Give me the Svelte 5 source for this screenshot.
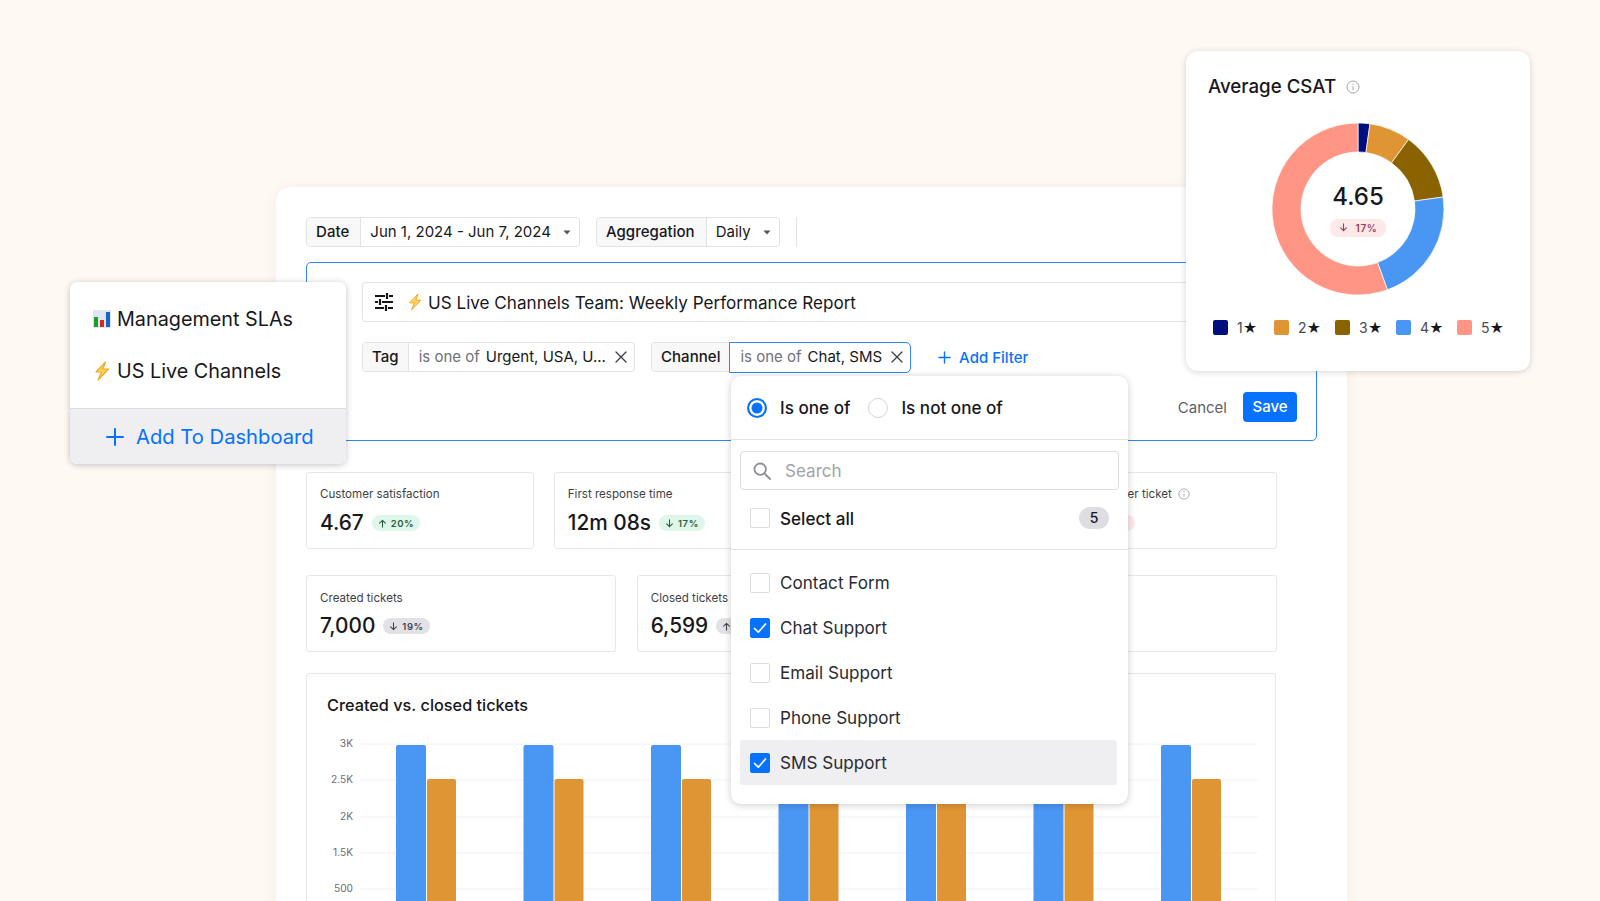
<script>
  const stats1 = [
    { label: 'Customer satisfaction', value: '4.67', dir: 'up', pct: '20%', tone: 'green' },
    { label: 'First response time', value: '12m 08s', dir: 'down', pct: '17%', tone: 'green' },
    {},
    { label: 'Response per ticket', value: '1.1', dir: 'up', pct: '3%', tone: 'pink', info: true }
  ];
  const stats2 = [
    { label: 'Created tickets', value: '7,000', dir: 'down', pct: '19%', tone: 'gray' },
    { label: 'Closed tickets', value: '6,599', dir: 'up', pct: '12%', tone: 'gray' },
    {}
  ];
  const ticks = [['3K', 73], ['2.5K', 109], ['2K', 146], ['1.5K', 182], ['500', 218]];
  const groups = [0, 1, 2, 3, 4, 5, 6].map((i) => 88 + i * 127.5);
  const channels = [
    { name: 'Contact Form', on: false },
    { name: 'Chat Support', on: true },
    { name: 'Email Support', on: false },
    { name: 'Phone Support', on: false },
    { name: 'SMS Support', on: true, hover: true }
  ];
  const legend = [
    ['#000f7d', '1'], ['#e09535', '2'], ['#8a6200', '3'], ['#4a96f3', '4'], ['#ff9585', '5']
  ];
  const R = 86, r = 57, cx = 86, cy = 86;
  const pt = (rad, a) => {
    const t = (a * Math.PI) / 180;
    return `${(cx + rad * Math.sin(t)).toFixed(2)} ${(cy - rad * Math.cos(t)).toFixed(2)}`;
  };
  const arc = (a, b) => {
    const large = b - a > 180 ? 1 : 0;
    return `M${pt(R, a)} A${R} ${R} 0 ${large} 1 ${pt(R, b)} L${pt(r, b)} A${r} ${r} 0 ${large} 0 ${pt(r, a)} Z`;
  };
  const slices = [
    ['#000f7d', 0, 8], ['#e09535', 8, 36], ['#8a6200', 36, 82], ['#4a96f3', 82, 160], ['#ff9585', 160, 360]
  ];
</script>

{#snippet bolt(size)}
  <svg class="bolt" width={size} height={size} viewBox="0 0 20 20">
    <path d="M13.5 1 L4 11 L9.5 11 L6 19 L16.5 8 L10.8 8 Z" fill="#ffd75e" stroke="#f7a21b" stroke-width="1.1" stroke-linejoin="round"/>
  </svg>
{/snippet}

{#snippet arrow(dir)}
  <svg class="arrow" width="9" height="9" viewBox="0 0 10 10" fill="none" stroke="currentColor" stroke-width="1.2" stroke-linecap="round" stroke-linejoin="round">
    {#if dir === 'up'}
      <path d="M5 9V1.5M1.8 4.6 5 1.4l3.2 3.2"/>
    {:else}
      <path d="M5 1v7.5M1.8 5.4 5 8.6l3.2-3.2"/>
    {/if}
  </svg>
{/snippet}

{#snippet close()}
  <svg class="x" width="12" height="12" viewBox="0 0 12 12" fill="none" stroke="#3d3d45" stroke-width="1.3" stroke-linecap="round">
    <path d="M1 1l10 10M11 1 1 11"/>
  </svg>
{/snippet}

{#snippet caret()}
  <svg class="caret" width="8" height="5" viewBox="0 0 8 5"><path d="M0.5 0.5h7L4 4.5z" fill="#55555e"/></svg>
{/snippet}

{#snippet info(size)}
  <svg class="info" width={size} height={size} viewBox="0 0 14 14" fill="none" stroke="#a2a2aa" stroke-width="1">
    <circle cx="7" cy="7" r="6"/>
    <path d="M7 6.2v4M7 3.6v1.1"/>
  </svg>
{/snippet}

{#snippet stat(s)}
  <div class="stat">
    {#if s.label}
      <div class="stat-label">{s.label}{#if s.info}{@render info(12)}{/if}</div>
      <div class="stat-line">
        <span class="stat-value">{s.value}</span>
        <span class="pill {s.tone}">{@render arrow(s.dir)}{s.pct}</span>
      </div>
    {/if}
  </div>
{/snippet}

{#snippet check(on)}
  <span class="box" class:on>
    {#if on}
      <svg width="14" height="14" viewBox="0 0 14 14" fill="none" stroke="#fff" stroke-width="1.7" stroke-linecap="round" stroke-linejoin="round"><path d="M1.5 7.5 5.3 11.2 12.5 3"/></svg>
    {/if}
  </span>
{/snippet}

<div class="page">
  <main class="sheet">
    <div class="toolbar">
      <div class="chip"><span class="key">Date</span><span class="val">Jun 1, 2024 - Jun 7, 2024 {@render caret()}</span></div>
      <div class="chip"><span class="key">Aggregation</span><span class="val">Daily {@render caret()}</span></div>
      <span class="rule"></span>
    </div>

    <section class="editor">
      <div class="title-input">
        <svg class="sliders" width="20" height="20" viewBox="0 0 20 20" fill="none" stroke="#15151a" stroke-width="2.2">
          <path d="M1 4h10M15 4h4M13 1v6M1 10h3M8 10h11M6 7v6M1 16h9M14 16h5M12 13v6"/>
        </svg>
        {@render bolt(18)}
        <span>US Live Channels Team: Weekly Performance Report</span>
      </div>
      <div class="filters">
        <div class="chip f"><span class="key">Tag</span><span class="val"><em>is one of</em> Urgent, USA, U... {@render close()}</span></div>
        <div class="chip f"><span class="key">Channel</span><span class="val active"><em>is one of</em> Chat, SMS {@render close()}</span></div>
        <span class="add-filter">
          <svg width="13" height="13" viewBox="0 0 13 13" stroke="#0772fd" stroke-width="1.4" stroke-linecap="round"><path d="M6.5 1v11M1 6.5h11"/></svg>
          Add Filter
        </span>
      </div>
      <div class="actions">
        <span class="cancel">Cancel</span>
        <span class="save">Save</span>
      </div>
    </section>

    <div class="stats four">
      {#each stats1 as s}{@render stat(s)}{/each}
    </div>
    <div class="stats three">
      {#each stats2 as s}{@render stat(s)}{/each}
    </div>

    <section class="chart">
      <h3>Created vs. closed tickets</h3>
      <svg class="plot" width="968" height="230" viewBox="0 0 968 230">
        {#each ticks as [t, y]}
          <line x1="52" x2="950" y1={y - 3} y2={y - 3} stroke="#f3f2f4" stroke-width="1"/>
          <text x="45" y={y}>{t}</text>
        {/each}
        {#each groups as x}
          <path d="M{x} 230V73a2 2 0 0 1 2-2h26a2 2 0 0 1 2 2V230z" fill="#4a96f3"/>
          <path d="M{x + 31} 230V107a2 2 0 0 1 2-2h25a2 2 0 0 1 2 2V230z" fill="#e09535"/>
        {/each}
      </svg>
    </section>
  </main>

  <aside class="dash-menu">
    <div class="dash-list">
      <div class="dash-item">
        <svg width="18" height="18" viewBox="0 0 18 18">
          <rect width="18" height="18" fill="#dfe6ee"/>
          <rect x="1" y="7" width="4" height="10" fill="#16a02e"/>
          <rect x="7" y="10" width="4" height="7" fill="#d9281c"/>
          <rect x="13" y="2" width="4" height="15" fill="#1a63c9"/>
        </svg>
        Management SLAs
      </div>
      <div class="dash-item">{@render bolt(20)} US Live Channels</div>
    </div>
    <div class="dash-add">
      <svg width="18" height="18" viewBox="0 0 18 18" stroke="#0772fd" stroke-width="2" stroke-linecap="round"><path d="M9 1v16M1 9h16"/></svg>
      Add To Dashboard
    </div>
  </aside>

  <aside class="dropdown">
    <div class="radios">
      <span class="radio on"></span><span class="r-label">Is one of</span>
      <span class="radio"></span><span class="r-label">Is not one of</span>
    </div>
    <div class="search-wrap">
      <div class="search">
        <svg width="18" height="18" viewBox="0 0 18 18" fill="none" stroke="#8f8f97" stroke-width="1.8" stroke-linecap="round"><circle cx="7.2" cy="7.2" r="5.7"/><path d="M11.5 11.5 17 17"/></svg>
        <span>Search</span>
      </div>
      <div class="select-all">
        {@render check(false)}
        <strong>Select all</strong>
        <span class="count">5</span>
      </div>
    </div>
    <div class="options">
      {#each channels as c}
        <div class="option" class:hover={c.hover}>
          {@render check(c.on)}
          <span>{c.name}</span>
        </div>
      {/each}
    </div>
  </aside>

  <aside class="csat">
    <div class="csat-title">Average CSAT {@render info(14)}</div>
    <div class="donut">
      <svg width="172" height="172" viewBox="0 0 172 172">
        {#each slices as [c, a, b]}
          <path d={arc(a, b)} fill={c} stroke="#fff" stroke-width="0.7"/>
        {/each}
      </svg>
      <div class="donut-center">
        <div class="score">4.65</div>
        <span class="pill pink small">{@render arrow('down')}17%</span>
      </div>
    </div>
    <div class="legend">
      {#each legend as [c, n]}
        <span class="legend-item"><i style="background:{c}"></i>{n}<b>★</b></span>
      {/each}
    </div>
  </aside>
</div>

<style>
  :global(body) {
    margin: 0;
    background: #fff9f4;
    font-family: Inter, "Liberation Sans", sans-serif;
    color: #17171c;
  }
  .page {
    position: relative;
    width: 1600px;
    height: 901px;
    overflow: hidden;
    box-sizing: border-box;
    padding: 187px 0 0 276px;
  }
  .sheet {
    box-sizing: border-box;
    width: 1071px;
    height: 900px;
    background: #fff;
    border-radius: 14px;
    padding: 30px 30px 0;
    box-shadow: 0 0 14px rgba(120, 90, 60, 0.08);
  }
  .toolbar { display: flex; align-items: center; gap: 16px; height: 30px; }
  .chip {
    display: flex;
    align-items: stretch;
    height: 30px;
    box-sizing: border-box;
    border: 1px solid #e3e2e6;
    border-radius: 4px;
    font-size: 15px;
    line-height: 28px;
    background: #fff;
  }
  .key {
    background: #f8f8f9;
    font-weight: 500;
    letter-spacing: 0.05px;
    padding: 0 11px 0 9px;
    border-right: 1px solid #e3e2e6;
    border-radius: 3px 0 0 3px;
  }
  .val { padding: 0 8px 0 9px; display: flex; align-items: center; gap: 4px; white-space: nowrap; }
  .caret { margin-left: 8px; }
  .f .key { padding: 0 9px; }
  .f .val { padding: 0 7px 0 10px; }
  .val em { font-style: normal; color: #70707a; margin-right: 2px; }
  .x { margin-left: 5px; }
  .rule { width: 1px; height: 30px; background: #e3e2e6; }

  .editor {
    box-sizing: border-box;
    margin-top: 15px;
    height: 179px;
    width: 1011px;
    border: 1.5px solid #2f86f6;
    border-radius: 5px;
    padding: 19px 19px 0 55px;
  }
  .title-input {
    display: flex;
    align-items: center;
    height: 40px;
    box-sizing: border-box;
    border: 1px solid #e3e2e6;
    border-radius: 4px;
    padding: 0 11px;
    font-size: 17.1px;
  }
  .sliders { margin-right: 12px; }
  .bolt { flex: none; }
  .title-input span { margin-left: 4px; white-space: nowrap; }
  .filters { display: flex; align-items: center; gap: 16px; margin-top: 20px; }
  .f .val.active {
    border-radius: 0 4px 4px 0;
    outline: 1.5px solid #2f86f6;
    background: #fff;
    margin: -0.5px -1px -0.5px 0;
  }
  .add-filter {
    display: flex;
    align-items: center;
    gap: 8px;
    margin-left: 12px;
    font-size: 15px;
    font-weight: 500;
    color: #0772fd;
  }
  .actions { display: flex; justify-content: flex-end; align-items: center; margin-top: 20px; gap: 16px; }
  .cancel { font-size: 15px; color: #5f5f68; }
  .save {
    background: #0772fd;
    color: #fff;
    font-size: 15px;
    font-weight: 500;
    width: 54px;
    height: 30px;
    line-height: 30px;
    text-align: center;
    border-radius: 4px;
  }

  .stats { display: grid; width: 971px; }
  .four { grid-template-columns: repeat(4, 1fr); gap: 20px; margin-top: 31px; }
  .three { grid-template-columns: repeat(3, 1fr); gap: 21px; margin-top: 26px; }
  .stat {
    box-sizing: border-box;
    height: 77px;
    border: 1px solid #e7e6ea;
    border-radius: 3px;
    padding: 13px 13px 0;
    background: #fff;
  }
  .three .stat { padding-top: 14px; }
  .three .stat-line { margin-top: 7px; }
  .stat-label { font-size: 11.6px; line-height: 16px; color: #3f3f48; display: flex; align-items: center; gap: 6px; white-space: nowrap; }
  .stat-line { display: flex; align-items: center; gap: 8px; margin-top: 8px; }
  .stat-value { font-size: 20.8px; font-weight: 500; line-height: 26px; color: #17171c; white-space: nowrap; }
  .pill {
    display: inline-flex;
    align-items: center;
    gap: 4px;
    height: 16px;
    padding: 0 6px;
    border-radius: 8px;
    font-size: 9.5px;
    font-weight: 600;
    letter-spacing: 0.6px;
    white-space: nowrap;
  }
  .green { background: #dff7ea; color: #2d5c42; }
  .gray { background: #e2e1e5; color: #44444c; }
  .pink { background: #fde8ea; color: #a23a50; }
  .small { height: 18px; padding: 0 9px; gap: 8px; font-size: 10px; }

  .chart {
    box-sizing: border-box;
    width: 970px;
    margin: 21px 0 0 0;
    height: 400px;
    border: 1px solid #e7e6ea;
    border-radius: 3px;
    padding: 21px 0 0 20px;
    background: #fff;
  }
  .chart h3 { margin: 0; font-size: 16.3px; line-height: 20px; font-weight: 500; }
  .plot { display: block; margin: -41px 0 0 -19px; overflow: visible; }
  .plot text { font-size: 10.2px; fill: #6d6d75; text-anchor: end; font-family: Inter, "Liberation Sans", sans-serif; }

  .dash-menu {
    position: absolute;
    left: 70px;
    top: 282px;
    width: 276px;
    height: 182px;
    display: flex;
    flex-direction: column;
    background: #fff;
    border-radius: 7px;
    box-shadow: 0 1px 6px rgba(40, 30, 50, 0.28);
    overflow: hidden;
  }
  .dash-list { height: 126px; box-sizing: border-box; padding: 11px 0 0 23px; }
  .dash-item {
    display: flex;
    align-items: center;
    gap: 6px;
    height: 52px;
    font-size: 19.8px;
    white-space: nowrap;
  }
  .dash-item .bolt { margin: 0 -1px; }
  .dash-add {
    flex: 1;
    display: flex;
    align-items: center;
    gap: 12px;
    padding-left: 36px;
    background: #efeef1;
    border-top: 1px solid #dddce0;
    color: #0772fd;
    font-size: 20.2px;
    white-space: nowrap;
  }

  .dropdown {
    position: absolute;
    left: 731px;
    top: 376px;
    width: 397px;
    height: 428px;
    box-sizing: border-box;
    background: #fff;
    border-radius: 10px;
    box-shadow: 0 1px 7px rgba(40, 30, 50, 0.24);
  }
  .radios {
    display: flex;
    align-items: center;
    height: 64px;
    padding-left: 16px;
    box-sizing: border-box;
    border-bottom: 1px solid #e3e2e6;
    font-size: 17.1px;
    font-weight: 500;
  }
  .radio {
    flex: none;
    box-sizing: border-box;
    width: 20px;
    height: 20px;
    border-radius: 50%;
    border: 1.5px solid #d5d4d9;
    background: #fff;
  }
  .radio.on { border: 2px solid #0772fd; box-shadow: inset 0 0 0 2.5px #fff; background: #0772fd; }
  .r-label { margin: 0 18px 0 13px; }
  .search-wrap { padding: 11px 9px 0; height: 110px; box-sizing: border-box; border-bottom: 1px solid #e3e2e6; }
  .search {
    display: flex;
    align-items: center;
    gap: 14px;
    height: 39px;
    box-sizing: border-box;
    border: 1px solid #dddce0;
    border-radius: 4px;
    padding-left: 12px;
    color: #a2a2aa;
    font-size: 17.1px;
  }
  .select-all { display: flex; align-items: center; height: 40px; margin-top: 8px; padding: 0 10px; font-size: 17.1px; }
  .select-all strong { font-weight: 500; margin-left: 10px; }
  .count {
    margin-left: auto;
    width: 30px;
    height: 22px;
    line-height: 22px;
    text-align: center;
    border-radius: 11px;
    background: #dedde1;
    font-size: 14px;
    font-weight: 500;
  }
  .box {
    flex: none;
    display: flex;
    align-items: center;
    justify-content: center;
    box-sizing: border-box;
    width: 20px;
    height: 20px;
    border: 1px solid #dddce0;
    border-radius: 2px;
    background: #fff;
  }
  .box.on { background: #0772fd; border-color: #0772fd; }
  .options { padding: 10px 11px 0 9px; }
  .option {
    display: flex;
    align-items: center;
    gap: 10px;
    height: 45px;
    padding: 0 10px;
    font-size: 17.1px;
    color: #2a2a31;
    border-radius: 3px;
  }
  .option.hover { background: #efeef1; }

  .csat {
    position: absolute;
    left: 1186px;
    top: 51px;
    width: 344px;
    height: 320px;
    box-sizing: border-box;
    padding: 23px 22px 0;
    background: #fff;
    border-radius: 12px;
    box-shadow: 0 1px 6px rgba(60, 40, 30, 0.2);
  }
  .csat-title { display: flex; align-items: center; gap: 10px; font-size: 18.7px; line-height: 26px; font-weight: 500; }
  .donut { position: relative; width: 172px; height: 172px; margin: 23px 0 0 64px; }
  .donut svg { display: block; }
  .donut-center {
    position: absolute;
    inset: 0;
    display: flex;
    flex-direction: column;
    align-items: center;
    justify-content: center;
    padding-top: 8px;
    box-sizing: border-box;
  }
  .score { font-size: 24px; font-weight: 500; line-height: 30px; margin-bottom: 7px; margin-top: -8px; }
  .legend { display: flex; margin-top: 24px; padding-left: 5px; }
  .legend-item { flex: none; display: flex; align-items: center; width: 61px; font-size: 14px; color: #4a4a52; white-space: nowrap; }
  .legend-item i { display: block; width: 15px; height: 15px; border-radius: 2px; margin-right: 9px; }
  .legend-item b { font-weight: 400; color: #17171c; }
</style>
